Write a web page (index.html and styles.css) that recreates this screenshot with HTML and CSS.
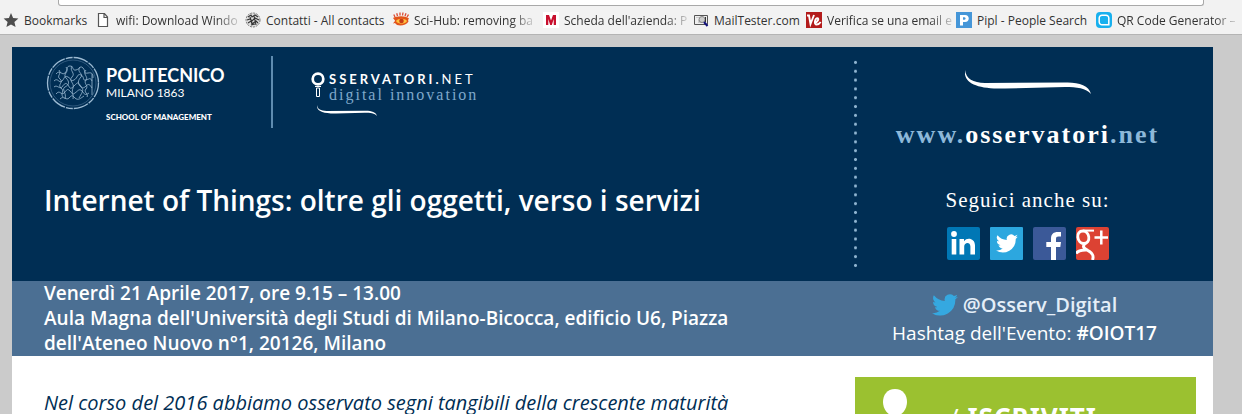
FILE: index.html
```html
<!DOCTYPE html>
<html lang="it">
<head>
<meta charset="utf-8">
<meta name="viewport" content="width=device-width, initial-scale=1">
<title>Internet of Things: oltre gli oggetti, verso i servizi</title>
<link rel="stylesheet" href="styles.css">
</head>
<body>
<svg class="defs" aria-hidden="true">
  <symbol id="bird" viewBox="0 0 24 20">
    <path d="M24 2.400a9.800 9.800 0 0 1-2.800.8A4.900 4.900 0 0 0 23.300.5a9.900 9.900 0 0 1-3.100 1.200 4.900 4.900 0 0 0-8.400 4.500A14 14 0 0 1 1.700 1a4.900 4.900 0 0 0 1.500 6.600 4.900 4.900 0 0 1-2.200-.6v.1a4.900 4.900 0 0 0 3.900 4.800 5 5 0 0 1-2.200.1 4.900 4.900 0 0 0 4.600 3.400A9.900 9.900 0 0 1 0 17.500 14 14 0 0 0 21.500 5z"/>
  </symbol>
  <symbol id="swoosh" viewBox="0 0 126 24">
    <path d="M0 0C1 9 8 12.500 20 13L100 12.500C113 12 124 15 126 24C121 18 112 17 100 17L40 18.500C14 19 -2 14 0 0Z"/>
  </symbol>
</svg>

<header class="browser">
  <div class="toolbar"><div class="address"></div></div>
  <nav class="bookmarks" aria-label="Bookmarks">
    <a class="bookmark" href="#"><svg viewBox="0 0 16 16"><path fill="#4d4d4d" d="M8 1l2.100 4.900 5.300.5-4 3.500 1.200 5.200L8 12.400l-4.600 2.700 1.200-5.200-4-3.500 5.300-.5z"/></svg><span>Bookmarks</span></a>
    <a class="bookmark" href="#"><svg viewBox="0 0 16 16"><path fill="#fff" stroke="#555" stroke-width="1.200" d="M3.500 1.500h6l3 3.500v9.500h-9zM9 1.500v4h3.500"/></svg><span class="fade">wifi: Download Windo</span></a>
    <a class="bookmark" href="#"><svg viewBox="0 0 16 16"><circle cx="8" cy="8" r="7" fill="#ddd" stroke="#777" stroke-dasharray="2 1"/><path fill="none" stroke="#333" stroke-width="1.100" d="M3 5l3-2 1 2 3-2 3 2M2 8l3-1 2 2 3-3 4 2M3 11l3-2 1 3 4-3 2 2M5 5l2 6M9 4l2 9M6 13l4-1"/></svg><span>Contatti - All contacts</span></a>
    <a class="bookmark" href="#"><svg viewBox="0 0 16 16"><path fill="none" stroke="#dc4b32" stroke-width="1.300" d="M2 5L.8 2.500M4.500 4L3.700 1.200M7 3.500V.5M9.500 3.500l.5-3M12 4l1-2.800M14 5l1.500-2.500"/><path fill="#e2541b" d="M0 6c3-2 12-3 16 .5-1 1-1 2-.5 3C13 14 4 15 2 11l-2 .5c1-1.500 2-2 2-3z"/><path fill="#ffc23d" d="M3 9c2-3 9-3 11 0-2 3.500-9 3.500-11 0z"/><circle cx="8.500" cy="9" r="2.300" fill="#c63a15"/></svg><span class="fade">Sci-Hub: removing ba</span></a>
    <a class="bookmark" href="#"><svg viewBox="0 0 16 16"><path fill="#fff" d="M0 0h16v16H0z"/><path fill="#c8102e" d="M3 13V3h3l2 5.500L10 3h3v10h-2.300V7L8.800 13H7.200L5.300 7v6z"/></svg><span class="fade">Scheda dell'azienda: P</span></a>
    <a class="bookmark" href="#"><svg viewBox="0 0 16 16"><path fill="#eee" stroke="#555" d="M1.500 3.500h13v9h-13z"/><path fill="#ccc" d="M3 5h3v1H3zM5 8h5v3H5z"/><circle cx="9" cy="7.500" r="3" fill="#ccc" stroke="#888"/><path stroke="#11117a" stroke-width="2" d="M11 10l3.500 4"/><path stroke="#333" d="M12.500 5v5"/></svg><span>MailTester.com</span></a>
    <a class="bookmark" href="#"><svg viewBox="0 0 16 16"><path fill="#b31b1b" d="M0 0h16v16H0z"/><path fill="none" stroke="#fff" stroke-width="1.900" d="M1 3.500h2L4.500 12 8 3M8.500 10.500c3 0 5-4 3-4.300-2.500 0-4 6.300-.8 6.300 1.800 0 3-1 4-2.500"/></svg><span class="fade">Verifica se una email e</span></a>
    <a class="bookmark" href="#"><svg viewBox="0 0 16 16"><path fill="#4596d8" d="M0 0h16v16H0z"/><path fill="#fff" fill-rule="evenodd" d="M4 3h5c5 0 5 7 0 7H7v3.500H4zM7 5.300v2.500h1.500c1.500 0 1.500-2.500 0-2.500z"/></svg><span>Pipl - People Search</span></a>
    <a class="bookmark" href="#"><svg viewBox="0 0 16 16"><rect width="16" height="16" rx="4" fill="#18b0ee"/><path fill="none" stroke="#fff" stroke-width="1.500" d="M12.800 12.800H6A2.800 2.800 0 0 1 3.200 10V6A2.800 2.800 0 0 1 6 3.200h4A2.800 2.800 0 0 1 12.800 6z"/><rect x="5.500" y="5.500" width="5" height="5" rx="1" fill="#18b0ee"/></svg><span class="fade">QR Code Generator –</span></a>
  </nav>
</header>

<main class="page">
  <section class="row hero">
    <div class="intro">
      <div class="logos">
        <div class="polimi">
          <svg class="seal" viewBox="0 0 54 54" fill="none" stroke="#9dbbd3">
            <circle cx="27" cy="27" r="25.500" stroke-width="1.300" stroke-dasharray="15 1 7 1"/>
            <circle cx="27" cy="27" r="23" stroke-width=".5" stroke="#5f83a5"/>
            <path stroke-width=".8" d="M10 18c4-5 6 2 9-1s1-7 5-7 2 5 6 4 4-5 7-2 0 6 5 5 5 2 5 5M8 25c4-4 5 3 8 0s2-6 6-4 2 5 6 3 3-7 7-5 1 6 5 5 4-3 6 1M8 31c3-3 6 3 8 0s4-5 6-2 2 5 6 1 4-4 6-1 3 4 6 1 4-1 6 2M10 38c4-5 5 2 8-1s3-5 6-2 2 4 5 2 4-5 7-2 2 5 7 2M14 43c4-4 6 2 9-1s3-3 6 0 6 0 9-2M13 14c3 4-3 6 1 9s-3 6 1 9-1 5 2 9M20 11c4 5-4 7 0 11s3 7-1 9 2 6 0 12M26 10c-3 5 4 7 0 11s3 6 1 11 1 6 0 11M34 11c-4 5 4 7 1 10s-4 7 0 10 0 7-2 11M40 14c-4 4 3 7 0 10s3 6 0 9 3 5 1 8M46 18v21"/>
          </svg>
          <div class="polimi-text">
            <span class="polimi-name">POLITECNICO</span>
            <span class="polimi-city">MILANO 1863</span>
            <span class="polimi-school">SCHOOL OF MANAGEMENT</span>
          </div>
        </div>
        <div class="osservatori">
          <svg class="lens" viewBox="0 0 14 26" fill="none" stroke="#fff"><circle cx="7" cy="7" r="5.300" stroke-width="2.700"/><path d="M4 14.500h6M5.500 16h3v8.500h-3z"/></svg>
          <div class="osservatori-text">
            <span class="osservatori-name"><b>SSERVATORI.</b>NET</span>
            <span class="osservatori-tag">digital innovation</span>
          </div>
          <svg class="swoosh-small" viewBox="0 0 126 24" preserveAspectRatio="none" fill="#fff"><use href="#swoosh"/></svg>
        </div>
      </div>
      <h1>Internet of Things: oltre gli oggetti, verso i servizi</h1>
    </div>
    <aside class="follow">
      <svg class="swoosh" fill="#fff"><use href="#swoosh"/></svg>
      <a class="site" href="#">www.<b>osservatori</b>.net</a>
      <p class="follow-title">Seguici anche su:</p>
      <div class="social">
        <a href="#" aria-label="LinkedIn"><svg viewBox="0 0 33 33"><rect width="33" height="33" rx="2" fill="#0077b5"/><circle cx="7" cy="7" r="2.900" fill="#fff"/><path fill="#fff" d="M4.700 12h4.600v15.500H4.700zM12.500 12H17v2.200c2.800-4.200 11-3.200 11 4.300v9h-4.600v-8c0-5-6.200-4.500-6.200 0v8h-4.700z"/></svg></a>
        <a href="#" aria-label="Twitter"><svg viewBox="0 0 33 33"><rect width="33" height="33" rx="1" fill="#2ca7df"/><use href="#bird" x="6" y="7" width="22" height="19" fill="#fff"/></svg></a>
        <a href="#" aria-label="Facebook"><svg viewBox="0 0 33 33"><rect width="33" height="33" rx="2" fill="#3b5998"/><path fill="#fff" d="M18 33V20h-4.700v-5H18v-3.500C18 7 21 5 24.500 5H28v4.500h-2.500c-2 0-2.500.8-2.500 2.500v3h5l-.7 5H23v13z"/></svg></a>
        <a href="#" aria-label="Google Plus"><svg viewBox="0 0 33 33"><rect width="33" height="33" rx="2" fill="#dc4233"/><g fill="none" stroke="#fff"><path stroke-width="2.800" d="M7 4C3 4 1.500 7 1.800 10c.4 4 3 6.500 6 6.500 3.500 0 5.500-3 5-6.500C12.300 6.500 10 4 7 4z"/><path stroke-width="2" d="M7 3.600h11"/><path stroke-width="3" d="M9 16c-3 4-1 5 2 7 6 3 7 6 5.500 10M0 26.500c2-3 6-4 12-3.500"/><path stroke-width="2.500" d="M18.500 10.500H32M25.300 3.500v14"/></g></svg></a>
      </div>
    </aside>
  </section>

  <section class="row band">
    <p class="where">Venerdì 21 Aprile 2017, ore 9.15 – 13.00<br>Aula Magna dell'Università degli Studi di Milano-Bicocca, edificio U6, Piazza dell'Ateneo Nuovo n°1, 20126, Milano</p>
    <div class="event">
      <a class="handle" href="#"><svg viewBox="0 0 24 20" fill="#35a8e0"><use href="#bird"/></svg>@Osserv_Digital</a>
      <p class="hashtag">Hashtag dell'Evento: <b>#OIOT17</b></p>
    </div>
  </section>

  <section class="row body">
    <p class="lead">Nel corso del 2016 abbiamo osservato segni tangibili della crescente maturità</p>
    <a class="signup" href="#"><svg viewBox="0 0 40 50" fill="#fff"><path d="M20 0C28 0 32 6 32 13C32 20 27 27 20 27C13 27 8 20 8 13C8 6 12 0 20 0Z"/><path d="M2 50C2 36 10 29 20 29S38 36 38 50Z"/></svg><span>/ <b>ISCRIVITI</b></span></a>
  </section>
</main>
</body>
</html>
```

FILE: styles.css
```css
* { box-sizing: border-box; }

html { scrollbar-width: none; }

body {
  margin: 0;
  background: #cbcbcb;
  color: #fff;
  font-family: "Trebuchet MS", "Open Sans", sans-serif;
}

p, h1 { margin: 0; }
a { color: inherit; text-decoration: none; }
svg { display: block; flex: none; }
.defs { display: none; }

.browser {
  background: #f2f2f2;
  border-bottom: 1px solid #b4b4b4;
}

.toolbar { padding: 0 38px 0 58px; }

.address {
  height: 6px;
  background: #fff;
  border: 1px solid #a9a9a9;
  border-top: 0;
  border-radius: 0 0 3px 3px;
}

.bookmarks {
  display: grid;
  grid-template-columns: 79px 137px 135px 137px 137px 100px 137px 127px 137px;
  column-gap: 13px;
  height: 28px;
  padding-left: 3px;
  overflow: hidden;
  color: #333;
  font: 12px "Segoe UI", "Open Sans", sans-serif;
}

.bookmark {
  display: flex;
  align-items: center;
  gap: 5px;
  min-width: 0;
  white-space: nowrap;
}

.bookmark svg { width: 16px; height: 16px; }
.bookmark span { flex: 1; }

.bookmark .fade {
  mask-image: linear-gradient(to right, #000 82%, rgba(0, 0, 0, 0.2));
}

.page {
  margin: 12px 29px 0 12px;
  background: #fff;
}

.row {
  display: grid;
  grid-template-columns: minmax(0, 1fr) 343px;
  column-gap: 100px;
  padding: 0 17px 0 32px;
}

.hero { background: #002e54; }

.logos { display: flex; padding-top: 9px; }

.polimi {
  display: flex;
  gap: 6px;
  width: 229px;
  height: 72px;
  padding-left: 2px;
  border-right: 2px solid #5f8cb0;
}

.seal { width: 54px; height: 54px; }

.polimi-text {
  display: flex;
  flex-direction: column;
  padding-top: 10px;
  font-family: Lato, sans-serif;
  white-space: nowrap;
}

.polimi-name { font-size: 18px; font-weight: 700; line-height: 18px; }
.polimi-city { font-size: 12px; line-height: 17px; }
.polimi-school { padding-top: 9px; font-size: 8px; font-weight: 900; line-height: 14px; }

.osservatori {
  display: grid;
  grid-template-columns: 14px auto;
  column-gap: 4px;
  align-content: start;
  padding: 16px 0 0 38px;
}

.lens { width: 14px; height: 26px; }

.osservatori-text {
  display: flex;
  flex-direction: column;
  white-space: nowrap;
}

.osservatori-name {
  font: 13px/14px Lato, sans-serif;
  letter-spacing: 3px;
}

.osservatori-tag {
  color: #7fa9cb;
  font: 16px/18px "Liberation Serif", serif;
  letter-spacing: 2px;
}

.swoosh-small {
  grid-column: 1 / -1;
  width: 60px;
  height: 11px;
  margin: 1px 0 0 6px;
}

h1 {
  padding: 52px 0 61px;
  font-size: 28px;
  font-weight: 600;
  line-height: 40px;
}

.follow {
  display: flex;
  flex-direction: column;
  align-items: center;
  margin: 11px 0;
  padding: 12px 0 0 6px;
  background: radial-gradient(circle, #8fb4d0 1px, transparent 2px) left top / 5px 9px;
  background-repeat: no-repeat round;
  font-family: "Liberation Serif", serif;
}

.swoosh { width: 126px; height: 24px; }

.site {
  margin-top: 25px;
  color: #8db8d9;
  font-size: 26px;
  font-weight: 700;
  line-height: 32px;
  letter-spacing: 2px;
}

.site b { color: #fff; }

.follow-title {
  margin-top: 35px;
  font-size: 21px;
  line-height: 28px;
  letter-spacing: 1px;
}

.social { display: flex; gap: 10px; margin-top: 13px; }
.social svg { width: 33px; height: 33px; }

.band { background: #4b6f93; font-size: 19px; }
.where { font-weight: 600; line-height: 25px; }

.event {
  display: flex;
  flex-direction: column;
  align-items: center;
  padding-top: 10px;
  line-height: 28px;
}

.handle {
  display: flex;
  align-items: center;
  gap: 5px;
  color: #e4eef8;
  font-size: 20px;
  font-weight: 600;
}

.handle svg { width: 26px; height: 22px; }
.hashtag b { font-weight: 600; }

.body { padding-top: 21px; }

.lead {
  padding-top: 13px;
  color: #002e54;
  font-size: 20px;
  font-style: italic;
  line-height: 25px;
}

.signup {
  display: flex;
  gap: 34px;
  margin-left: 2px;
  padding: 12px 20px;
  background: #9bc130;
  font-family: "Noto Sans", sans-serif;
  font-size: 26px;
}

.signup svg { width: 40px; height: 50px; }
.signup span { padding-top: 10px; letter-spacing: 1px; }
```
